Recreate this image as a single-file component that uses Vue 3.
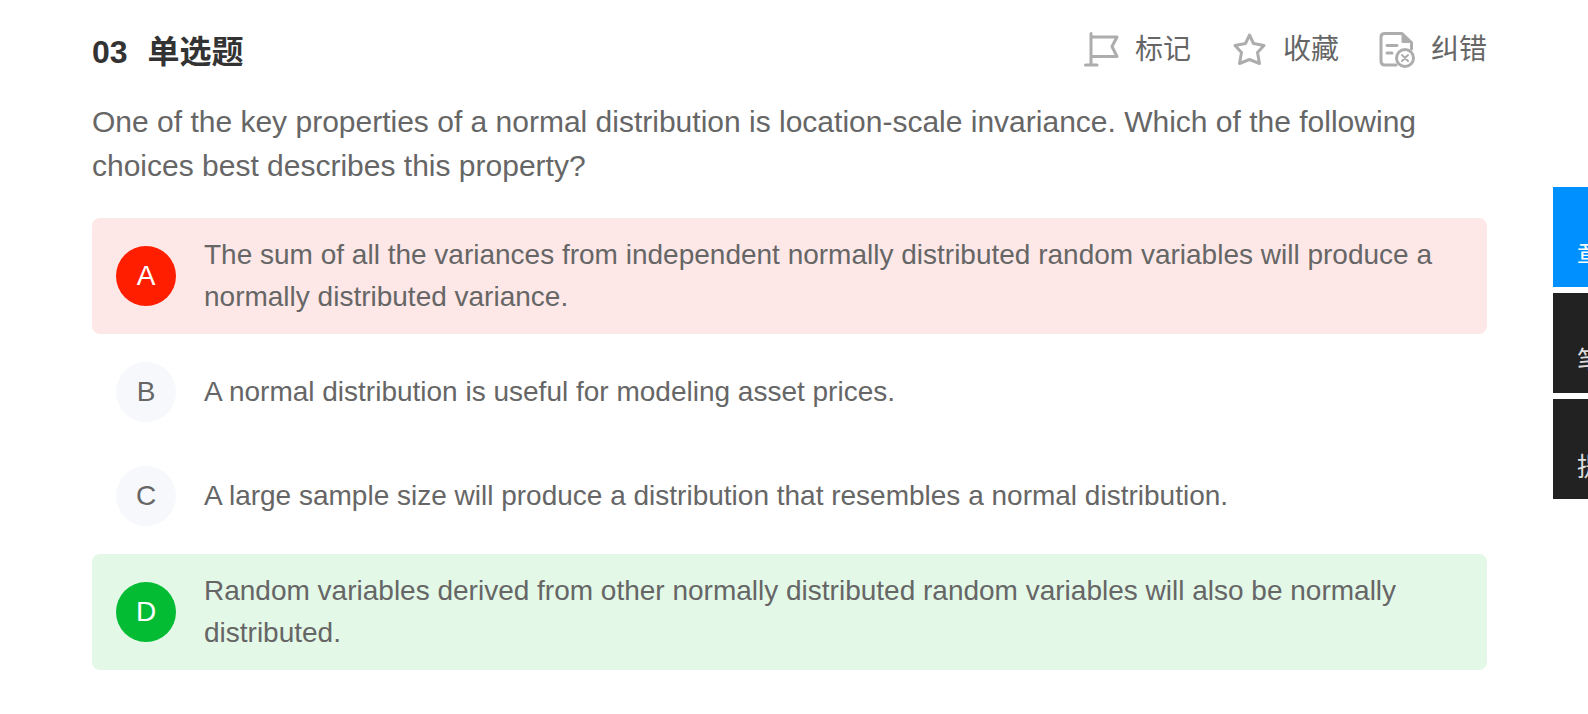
<script setup>
import { ref } from 'vue'

const options = [
  { key: 'A', state: 'wrong', text: 'The sum of all the variances from independent normally distributed random variables will produce a normally distributed variance.' },
  { key: 'B', state: '', text: 'A normal distribution is useful for modeling asset prices.' },
  { key: 'C', state: '', text: 'A large sample size will produce a distribution that resembles a normal distribution.' },
  { key: 'D', state: 'right', text: 'Random variables derived from other normally distributed random variables will also be normally distributed.' },
]

const tabs = ['章节', '笔记', '提问']
const activeTab = ref('章节')
</script>

<template>
  <div class="page">
    <main class="question">
      <header class="head">
        <h1 class="title"><span>03</span><span>单选题</span></h1>
        <div class="tools">
          <button type="button" class="tool">
            <svg width="36" height="36" viewBox="0 0 36 36" aria-hidden="true">
              <path d="M8 1.500V33M2.500 33H14M8 5H34L29 14.500L34 24.500H8" />
            </svg>
            <span>标记</span>
          </button>
          <button type="button" class="tool">
            <svg width="36" height="36" viewBox="0 0 36 36" aria-hidden="true">
              <path d="M18.500 3L22.500 11.500L33 13.500L26.500 20.500L28.500 31.500L18.500 27.500L8.500 31.500L10.500 20.500L4 13.500L14.500 11.500Z" />
            </svg>
            <span>收藏</span>
          </button>
          <button type="button" class="tool">
            <svg width="36" height="36" viewBox="0 0 36 36" aria-hidden="true">
              <path d="M17 33H6Q2 33 2 29V5Q2 1.500 6 1.500H23L32.500 10.500V17" />
              <path class="fold" d="M23 2V10.500H32Z" />
              <path d="M8 13.500H18M8 21H13" />
              <circle cx="26" cy="26" r="8.500" />
              <path class="thin" d="M23 23L29 29M29 23L23 29" />
            </svg>
            <span>纠错</span>
          </button>
        </div>
      </header>

      <p class="stem">
        One of the key properties of a normal distribution is location-scale invariance. Which of the following choices best describes this property?
      </p>

      <div class="options">
        <button v-for="o in options" :key="o.key" type="button" class="option" :class="o.state">
          <span class="badge">{{ o.key }}</span>
          <span class="text">{{ o.text }}</span>
        </button>
      </div>
    </main>

    <aside class="side">
      <button
        v-for="t in tabs"
        :key="t"
        type="button"
        class="tab"
        :class="{ active: t === activeTab }"
        @click="activeTab = t"
      >{{ t }}</button>
    </aside>
  </div>
</template>

<style>
body {
  margin: 0;
  background: #fff;
}
</style>

<style scoped>
.page {
  display: flex;
  align-items: flex-start;
  overflow: hidden;
  font-family: "Liberation Sans", "Noto Sans CJK SC", sans-serif;
  color: #666;
}
button {
  margin: 0;
  padding: 0;
  border: 0;
  background: none;
  color: inherit;
  font-family: inherit;
  text-align: left;
  cursor: pointer;
}
.question {
  flex: 1;
  min-width: 0;
  padding: 28px 66px 40px 92px;
}
.head {
  display: flex;
  justify-content: space-between;
  align-items: flex-start;
}
.title {
  display: flex;
  gap: 20px;
  margin: 0;
  font-size: 32px;
  line-height: 48px;
  font-weight: 700;
  color: #333;
}
.tools {
  display: flex;
  gap: 40px;
}
.tool {
  display: flex;
  align-items: center;
  gap: 16px;
  font-size: 28px;
  line-height: 44px;
}
.tool svg {
  fill: none;
  stroke: #adadad;
  stroke-width: 3;
  stroke-linejoin: round;
  stroke-linecap: round;
}
.tool .fold {
  fill: #adadad;
  stroke-width: 1;
}
.tool .thin {
  stroke-width: 2;
}
.stem {
  margin: 24px 0 30px;
  font-size: 30px;
  line-height: 44px;
}
.options {
  display: flex;
  flex-direction: column;
  gap: 12px;
}
.option {
  display: flex;
  align-items: center;
  gap: 28px;
  padding: 16px 24px;
  border-radius: 8px;
  font-size: 28px;
  line-height: 42px;
}
.badge {
  flex: none;
  width: 60px;
  border-radius: 50%;
  background: #f6f8fb;
  line-height: 60px;
  text-align: center;
}
.wrong {
  background: #fde8e7;
}
.wrong .badge {
  background: #ff1e00;
  color: #fff;
}
.right {
  background: #e3f8e7;
}
.right .badge {
  background: #04bb34;
  color: #fff;
}
.side {
  display: flex;
  flex-direction: column;
  gap: 6px;
  width: 35px;
  margin-top: 187px;
}
.tab {
  width: 100px;
  height: 100px;
  padding-top: 36px;
  background: #222;
  color: #ddd;
  font-size: 26px;
  line-height: 36px;
  text-align: center;
}
.tab.active {
  background: #0090ff;
  color: #fff;
}
</style>
